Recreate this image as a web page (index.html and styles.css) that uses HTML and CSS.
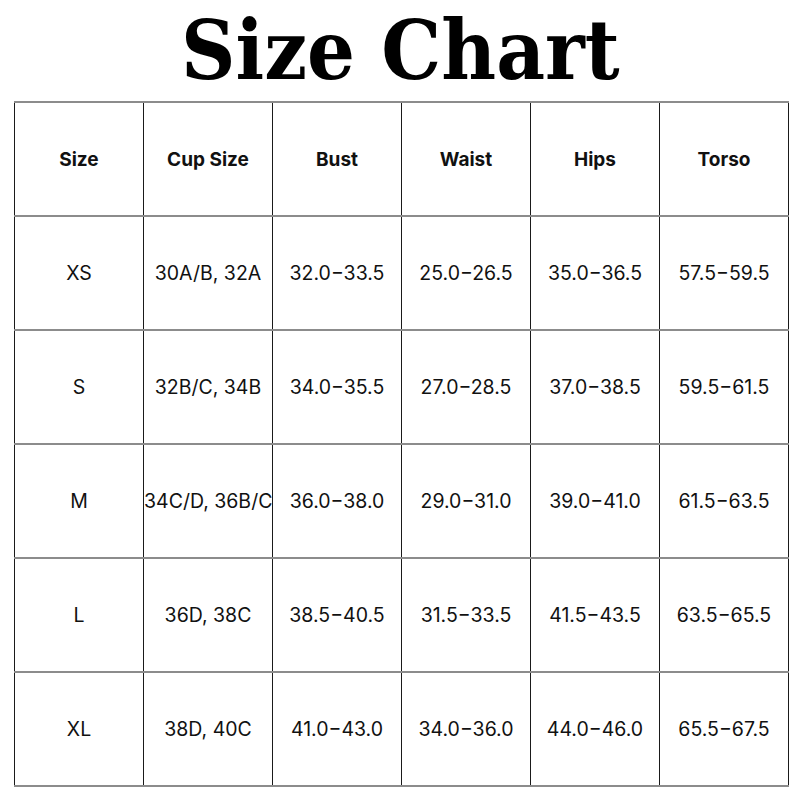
FILE: index.html
```html
<!DOCTYPE html>
<html>
<head>
<meta charset="utf-8">
<link rel="stylesheet" href="styles.css">
</head>
<body>
<div class="page">
  <h1 class="title"><span class="title-text">Size Chart</span></h1>
  <table class="chart">
    <thead>
      <tr><th>Size</th><th>Cup Size</th><th>Bust</th><th>Waist</th><th>Hips</th><th>Torso</th></tr>
    </thead>
    <tbody>
      <tr><td>XS</td><td>30A/B, 32A</td><td>32.0−33.5</td><td>25.0−26.5</td><td>35.0−36.5</td><td>57.5−59.5</td></tr>
      <tr><td>S</td><td>32B/C, 34B</td><td>34.0−35.5</td><td>27.0−28.5</td><td>37.0−38.5</td><td>59.5−61.5</td></tr>
      <tr><td>M</td><td>34C/D, 36B/C</td><td>36.0−38.0</td><td>29.0−31.0</td><td>39.0−41.0</td><td>61.5−63.5</td></tr>
      <tr><td>L</td><td>36D, 38C</td><td>38.5−40.5</td><td>31.5−33.5</td><td>41.5−43.5</td><td>63.5−65.5</td></tr>
      <tr><td>XL</td><td>38D, 40C</td><td>41.0−43.0</td><td>34.0−36.0</td><td>44.0−46.0</td><td>65.5−67.5</td></tr>
    </tbody>
  </table>
</div>
</body>
</html>
```

FILE: styles.css
```css
html, body {
  margin: 0;
  padding: 0;
  background: #ffffff;
}
.page {
  width: 800px;
  height: 800px;
  display: flex;
  flex-direction: column;
  align-items: center;
}
.title {
  margin: 0;
  height: 101px;
  font-family: "DejaVu Serif", "Liberation Serif", serif;
  font-weight: bold;
  font-size: 82px;
  line-height: 101px;
  color: #000;
}
.title-text {
  display: inline-block;
  transform: scaleX(0.92);
  position: relative;
  top: 0;
}
.chart {
  align-self: flex-start;
  margin-left: 14px;
  border-collapse: collapse;
  table-layout: fixed;
  width: 775px;
  font-family: Inter, "Noto Sans", sans-serif;
  color: #111;
  font-size: 19.5px;
}
.chart th, .chart td {
  border-left: 1px solid #1a1a1a;
  border-right: 1px solid #1a1a1a;
  border-top: 2px solid #8c8c8c;
  border-bottom: 2px solid #8c8c8c;
  height: 112px;
  padding: 0;
  text-align: center;
  vertical-align: middle;
  white-space: nowrap;
  overflow: visible;
}
.chart th {
  font-weight: 700;
  font-size: 19px;
}
```
